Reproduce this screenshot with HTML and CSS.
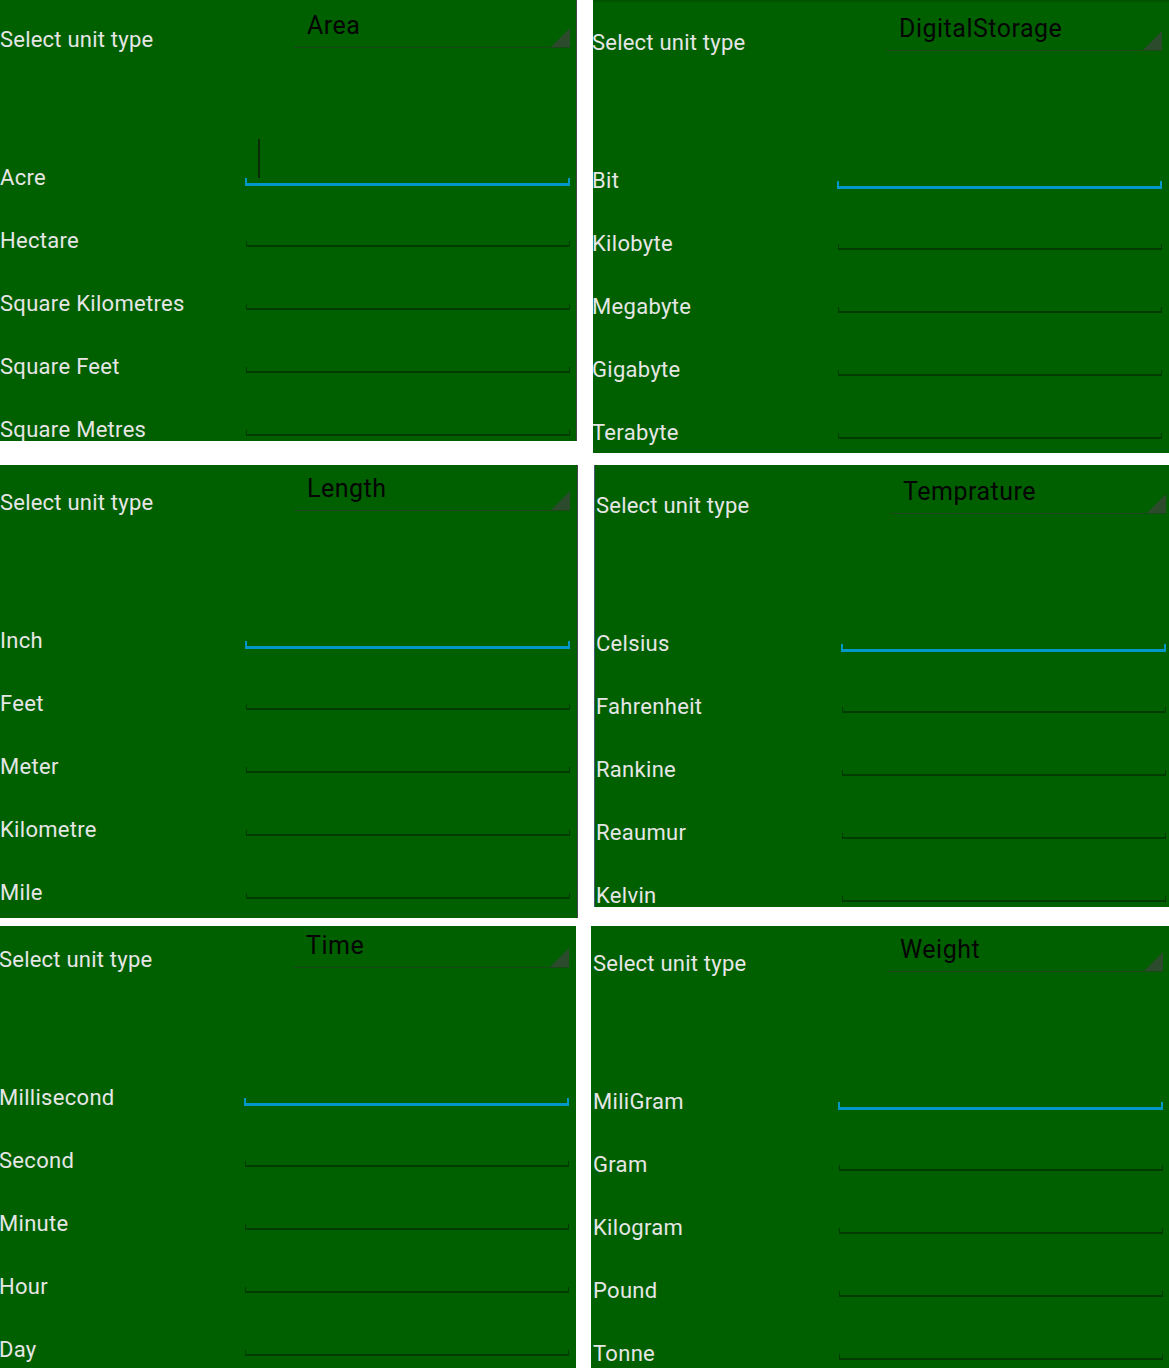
FILE: index.html
```html
<!DOCTYPE html>
<html lang="en">
<head>
<meta charset="utf-8">
<title>Unit Converter</title>
<link rel="stylesheet" href="styles.css">
</head>
<body>
<div class="collage">

  <section class="panel p-area">
    <div class="body">
      <div class="header">
        <div class="prompt">Select unit type</div>
        <div class="spinner"><span class="spinner-text">Area</span><span class="corner"></span></div>
      </div>
      <div class="row"><div class="label">Acre</div><div class="field active"><div class="cursor"></div><div class="line"></div></div></div>
      <div class="row"><div class="label">Hectare</div><div class="field"><div class="line"></div></div></div>
      <div class="row"><div class="label">Square Kilometres</div><div class="field"><div class="line"></div></div></div>
      <div class="row"><div class="label">Square Feet</div><div class="field"><div class="line"></div></div></div>
      <div class="row"><div class="label">Square Metres</div><div class="field"><div class="line"></div></div></div>
    </div>
  </section>

  <section class="panel p-storage">
    <div class="body">
      <div class="header">
        <div class="prompt">Select unit type</div>
        <div class="spinner"><span class="spinner-text">DigitalStorage</span><span class="corner"></span></div>
      </div>
      <div class="row"><div class="label">Bit</div><div class="field active"><div class="line"></div></div></div>
      <div class="row"><div class="label">Kilobyte</div><div class="field"><div class="line"></div></div></div>
      <div class="row"><div class="label">Megabyte</div><div class="field"><div class="line"></div></div></div>
      <div class="row"><div class="label">Gigabyte</div><div class="field"><div class="line"></div></div></div>
      <div class="row"><div class="label">Terabyte</div><div class="field"><div class="line"></div></div></div>
    </div>
  </section>

  <section class="panel p-length">
    <div class="body">
      <div class="header">
        <div class="prompt">Select unit type</div>
        <div class="spinner"><span class="spinner-text">Length</span><span class="corner"></span></div>
      </div>
      <div class="row"><div class="label">Inch</div><div class="field active"><div class="line"></div></div></div>
      <div class="row"><div class="label">Feet</div><div class="field"><div class="line"></div></div></div>
      <div class="row"><div class="label">Meter</div><div class="field"><div class="line"></div></div></div>
      <div class="row"><div class="label">Kilometre</div><div class="field"><div class="line"></div></div></div>
      <div class="row"><div class="label">Mile</div><div class="field"><div class="line"></div></div></div>
    </div>
  </section>

  <section class="panel p-temp">
    <div class="body">
      <div class="header">
        <div class="prompt">Select unit type</div>
        <div class="spinner"><span class="spinner-text">Temprature</span><span class="corner"></span></div>
      </div>
      <div class="row"><div class="label">Celsius</div><div class="field active"><div class="line"></div></div></div>
      <div class="row"><div class="label">Fahrenheit</div><div class="field"><div class="line"></div></div></div>
      <div class="row"><div class="label">Rankine</div><div class="field"><div class="line"></div></div></div>
      <div class="row"><div class="label">Reaumur</div><div class="field"><div class="line"></div></div></div>
      <div class="row"><div class="label">Kelvin</div><div class="field"><div class="line"></div></div></div>
    </div>
  </section>

  <section class="panel p-time">
    <div class="body">
      <div class="header">
        <div class="prompt">Select unit type</div>
        <div class="spinner"><span class="spinner-text">Time</span><span class="corner"></span></div>
      </div>
      <div class="row"><div class="label">Millisecond</div><div class="field active"><div class="line"></div></div></div>
      <div class="row"><div class="label">Second</div><div class="field"><div class="line"></div></div></div>
      <div class="row"><div class="label">Minute</div><div class="field"><div class="line"></div></div></div>
      <div class="row"><div class="label">Hour</div><div class="field"><div class="line"></div></div></div>
      <div class="row"><div class="label">Day</div><div class="field"><div class="line"></div></div></div>
    </div>
  </section>

  <section class="panel p-weight">
    <div class="body">
      <div class="header">
        <div class="prompt">Select unit type</div>
        <div class="spinner"><span class="spinner-text">Weight</span><span class="corner"></span></div>
      </div>
      <div class="row"><div class="label">MiliGram</div><div class="field active"><div class="line"></div></div></div>
      <div class="row"><div class="label">Gram</div><div class="field"><div class="line"></div></div></div>
      <div class="row"><div class="label">Kilogram</div><div class="field"><div class="line"></div></div></div>
      <div class="row"><div class="label">Pound</div><div class="field"><div class="line"></div></div></div>
      <div class="row"><div class="label">Tonne</div><div class="field"><div class="line"></div></div></div>
    </div>
  </section>

</div>
</body>
</html>
```

FILE: styles.css
```css
html, body {
  margin: 0;
  padding: 0;
  background: #ffffff;
}

body {
  font-family: Roboto, "Liberation Sans", sans-serif;
  width: 1169px;
  height: 1368px;
  overflow: hidden;
}

.collage {
  display: grid;
  grid-template-columns: 593px 576px;
  grid-template-rows: 465px 461px 442px;
  align-items: start;
}

.panel {
  background: #006000;
  overflow: hidden;
  box-sizing: border-box;
  --dx: 0px;
  --dy: 0px;
}

.p-area {
  width: 577px;
  height: 441px;
  border-right: 1px solid #45474d;
}

.p-storage {
  width: 576px;
  height: 453px;
  border-top: 2px solid #005400;
  --dx: -1px;
  --dy: 1px;
}

.p-length {
  width: 578px;
  height: 453px;
  border-right: 1px solid #45474d;
  --dy: -2px;
}

.p-temp {
  width: 575px;
  height: 442px;
  margin-left: 1px;
  border-left: 1px solid #4a5878;
  --dx: 1px;
  --dy: 1px;
}

.p-time {
  width: 576px;
  height: 442px;
  --dx: -1px;
  --dy: -6px;
}

.p-weight {
  width: 578px;
  height: 442px;
  margin-left: -2px;
  --dx: 2px;
  --dy: -2px;
}

.body {
  margin-top: var(--dy);
  margin-left: var(--dx);
  width: 576px;
}

.header {
  display: flex;
  height: 139px;
}

.prompt {
  width: 294px;
  flex: none;
  margin-top: 27px;
  height: 26px;
  line-height: 26px;
  font-size: 22px;
  letter-spacing: 0.22px;
  color: #e6e6e6;
  white-space: nowrap;
}

.spinner {
  display: flex;
  width: 276px;
  height: 48px;
  box-sizing: border-box;
  border-bottom: 1px solid #1b481b;
}

.spinner-text {
  flex: 1;
  padding-left: 13px;
  padding-top: 12px;
  line-height: 28px;
  height: 28px;
  font-size: 25px;
  letter-spacing: 0.5px;
  color: #050505;
  white-space: nowrap;
}

.corner {
  align-self: flex-end;
  width: 19px;
  height: 19px;
  background: #2c4a2c;
  clip-path: polygon(100% 0, 100% 100%, 0 100%);
}

.row {
  display: grid;
  grid-template-columns: 245px 325px;
  height: 63px;
}

.label {
  margin-top: 26px;
  height: 26px;
  line-height: 26px;
  font-size: 22px;
  letter-spacing: 0.3px;
  color: #e6e6e6;
  white-space: nowrap;
}

.field {
  display: flex;
  flex-direction: column;
  justify-content: flex-end;
  height: 45px;
}

.field.active {
  height: 47px;
}

.cursor {
  width: 2px;
  height: 39px;
  margin-left: 13px;
  margin-bottom: auto;
  background: #0b2b0b;
}

.line {
  box-sizing: border-box;
  height: 6px;
  margin-left: 1px;
  border: 2px solid #003c00;
  border-top: none;
  border-left-width: 1px;
  border-right-width: 1px;
}

.field.active .line {
  height: 8px;
  margin-left: 0;
  border-color: #0397c8;
  border-bottom-width: 3px;
  border-left-width: 2px;
  border-right-width: 2px;
}
```
